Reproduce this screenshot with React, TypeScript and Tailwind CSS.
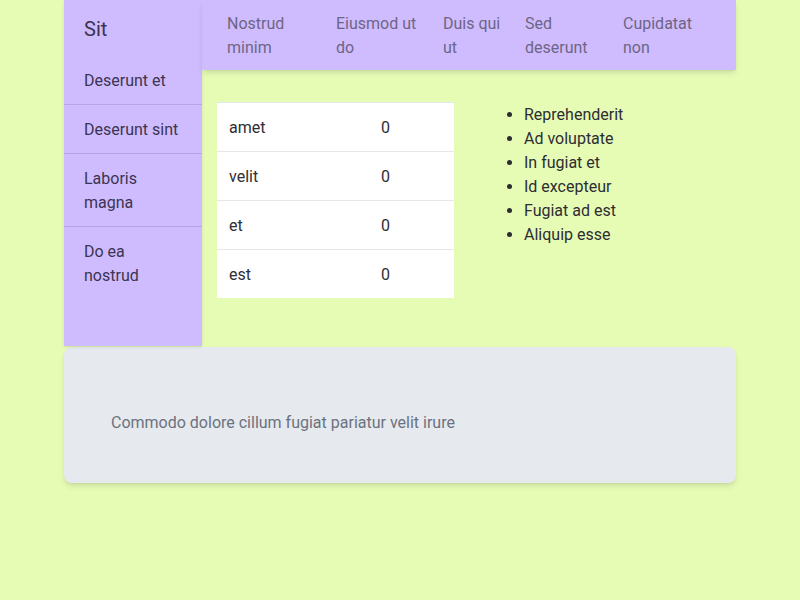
const navItems = [
  { label: 'Nostrud minim', w: 'w-[109px]' },
  { label: 'Eiusmod ut do', w: 'w-[107px]' },
  { label: 'Duis qui ut', w: 'w-[82px]' },
  { label: 'Sed deserunt', w: 'w-[98px]' },
  { label: 'Cupidatat non', w: 'w-[110px]' },
]

const sideItems = ['Deserunt et', 'Deserunt sint', 'Laboris magna', 'Do ea nostrud']

const rows = ['amet', 'velit', 'et', 'est']

const bullets = ['Reprehenderit', 'Ad voluptate', 'In fugiat et', 'Id excepteur', 'Fugiat ad est', 'Aliquip esse']

export default function App() {
  return (
    <div
      className="min-h-[600px] bg-[#e6fcb5] text-base"
      style={{ fontFamily: 'Roboto, "Noto Sans", sans-serif' }}
    >
      <div className="mx-auto w-[672px]">
        <div className="flex">
          {/* Sidebar */}
          <aside className="w-[138px] shrink-0 bg-[#cfbcff] shadow-sm text-[#3b3452]">
            <div className="h-14 flex items-center pt-0.5 px-5 text-xl">Sit</div>
            <ul>
              {sideItems.map((item, i) => (
                <li
                  key={item}
                  className={`px-5 pt-[13px] pb-[11px] leading-6 ${i < sideItems.length - 1 ? 'border-b border-[#b7a5e6]' : ''}`}
                >
                  {item}
                </li>
              ))}
            </ul>
          </aside>

          {/* Main */}
          <div className="flex-1 flex flex-col">
            <nav className="h-[70px] flex items-center pt-0.5 pl-[1px] bg-[#cfbcff] shadow-md text-[#6e6585]">
              {navItems.map(({ label, w }) => (
                <div key={label} className={`${w} pl-6 leading-6`}>
                  {label}
                </div>
              ))}
            </nav>

            <div className="flex items-start pt-8 pb-12 pl-[15px]">
              <table className="w-[237px] bg-white text-[#2d2d33] border-t border-gray-200">
                <tbody>
                  {rows.map((r, i) => (
                    <tr key={r} className={i < rows.length - 1 ? 'border-b border-gray-200' : ''}>
                      <td className="pt-[13px] pb-[11px] pl-3 leading-6">{r}</td>
                      <td className="pt-[13px] pb-[11px] w-[73px] leading-6">0</td>
                    </tr>
                  ))}
                </tbody>
              </table>

              <ul className="ml-[50px] pl-5 pt-px list-disc text-[#2d2d33] leading-6">
                {bullets.map((b) => (
                  <li key={b}>{b}</li>
                ))}
              </ul>
            </div>
          </div>
        </div>

        {/* Footer */}
        <footer className="h-[136px] mt-px flex items-center pt-[16px] px-[47px] bg-[#e6e9ed] rounded-lg shadow-md text-[#6b7280]">
          Commodo dolore cillum fugiat pariatur velit irure
        </footer>
      </div>
    </div>
  )
}
